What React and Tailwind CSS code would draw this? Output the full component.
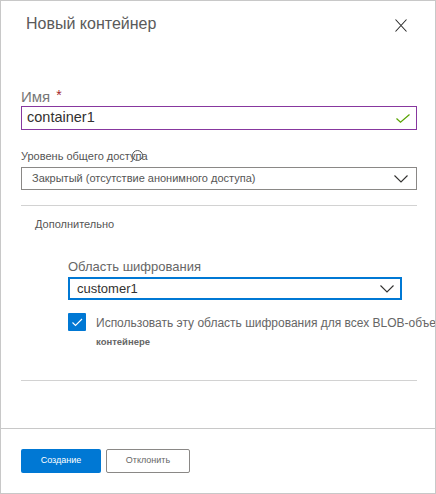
import React from 'react';

function Chevron({ className }) {
  return (
    <svg width="14" height="8" viewBox="0 0 14 8" className={className}>
      <path d="M0.5 0.5 L7 7 L13.5 0.5" fill="none" stroke="#323130" strokeWidth="1.1" />
    </svg>
  );
}

export default function App() {
  return (
    <div className="w-[436px] h-[494px] border border-[#c8c8c8] bg-white flex flex-col overflow-hidden font-['Liberation_Sans',Arial,sans-serif]">
      {/* header */}
      <div className="flex items-start justify-between pl-[25px] pr-[28px] pt-[13px]">
        <h1 className="text-[16px] leading-[20px] text-[#5a5a5a]">Новый контейнер</h1>
        <svg width="12" height="13" viewBox="0 0 12 13" className="mt-[5px]">
          <path d="M0.5 0.5 L11.5 12.5 M11.5 0.5 L0.5 12.5" stroke="#2b2b2b" strokeWidth="1.1" fill="none" />
        </svg>
      </div>

      {/* body */}
      <div className="flex-1 pl-[20px] pr-[18px]">
        <div className="mt-[54px] flex items-start leading-[18px]">
          <span className="text-[15px] text-[#777]">Имя</span>
          <span className="ml-[6px] text-[14px] leading-[14px] text-[#a4262c]">*</span>
        </div>
        <div className="h-[24px] border border-[#87379f] flex items-center justify-between pl-[5px] pr-[6px]">
          <span className="text-[14.5px] text-[#323130]">container1</span>
          <svg width="14" height="9" viewBox="0 0 14 9">
            <path d="M0.5 4.5 L4.5 8.2 L13.5 0.5" fill="none" stroke="#57a300" strokeWidth="1.2" />
          </svg>
        </div>

        <div className="mt-[18px] mb-[3px] relative leading-[16px] text-[11px] text-[#555]">
          Уровень общего доступа
          <span className="absolute left-[111px] top-[2px] w-[11px] h-[11px] rounded-full border border-[#555]"></span>
        </div>
        <div className="h-[23px] border border-[#8a8886] flex items-center justify-between pl-[10px] pr-[8px]">
          <span className="text-[11px] text-[#555]">Закрытый (отсутствие анонимного доступа)</span>
          <Chevron />
        </div>

        <div className="mt-[15px] h-px bg-[#d2d2d2]"></div>

        <div className="mt-[10px] ml-[14px] text-[11px] leading-[16px] text-[#555]">Дополнительно</div>

        <div className="ml-[47px]">
          <div className="mt-[26px] mb-[2px] text-[13px] leading-[17px] text-[#666]">Область шифрования</div>
          <div className="w-[334px] h-[23px] border-2 border-[#0078d4] flex items-center justify-between pl-[7px] pr-[6px]">
            <span className="text-[13px] text-[#323130]">customer1</span>
            <Chevron />
          </div>

          <div className="mt-[13px] flex items-start gap-[10px]">
            <div className="w-[18px] h-[18px] shrink-0 bg-[#0078d4] rounded-[1px] flex items-center justify-center">
              <svg width="18" height="18" viewBox="0 0 18 18">
                <path d="M4.5 9.5 L7.5 12.5 L14 6" fill="none" stroke="#fff" strokeWidth="1.1" />
              </svg>
            </div>
            <div className="pt-[2px] whitespace-nowrap">
              <div className="text-[12px] leading-[16px] text-[#666]">
                Использовать эту область шифрования для всех BLOB-объектов в этом
              </div>
              <div className="mt-[5px] text-[9.5px] leading-[12px] font-semibold text-[#666]">контейнере</div>
            </div>
          </div>
        </div>

        <div className="mt-[32px] h-px bg-[#d2d2d2]"></div>
      </div>

      {/* footer */}
      <div className="h-[65px] border-t border-[#c8c8c8] pl-[20px] pt-[20px] flex items-start gap-[5px]">
        <button className="w-[80px] h-[24px] bg-[#0078d4] rounded-[2px] text-white text-[9px]">Создание</button>
        <button className="w-[84px] h-[24px] border border-[#8a8886] rounded-[2px] text-[#666] text-[9px]">Отклонить</button>
      </div>
    </div>
  );
}
